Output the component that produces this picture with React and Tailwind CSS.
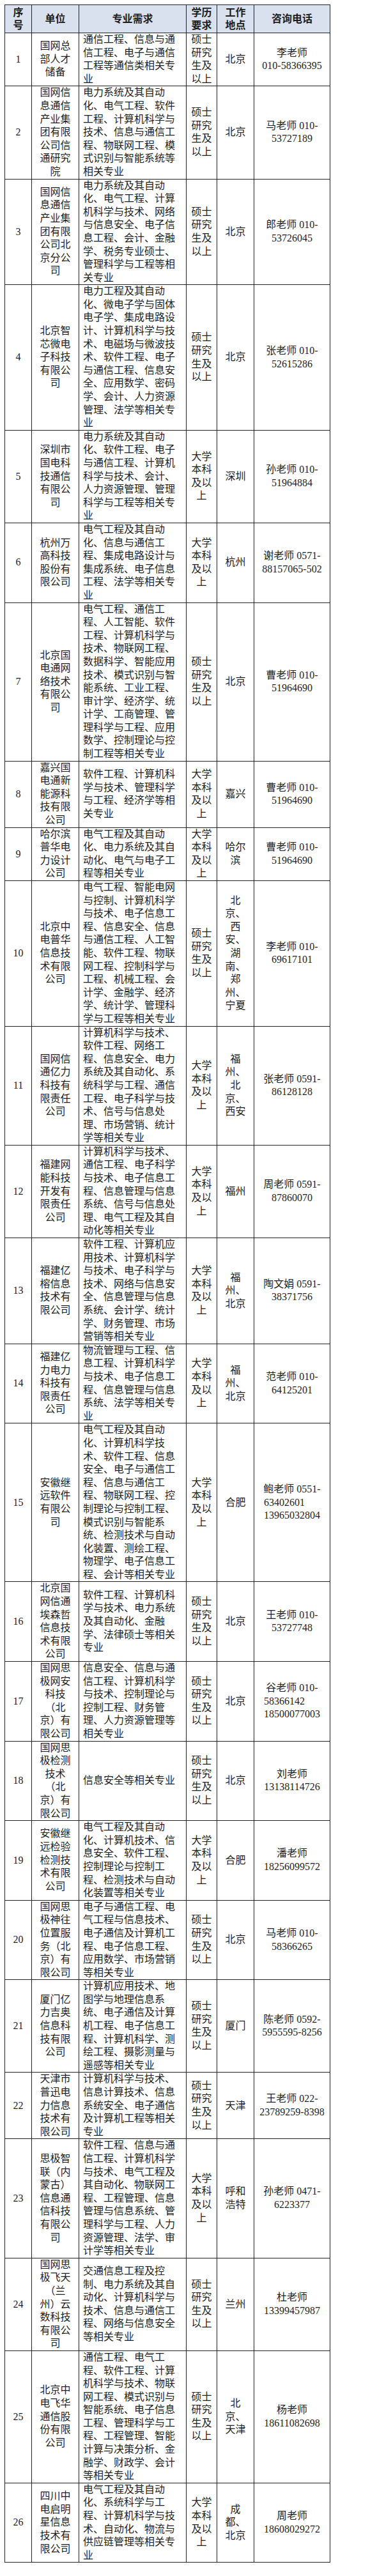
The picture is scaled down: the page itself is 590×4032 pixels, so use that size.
const M = '硕士/研究/生及/以上';
const B = '大学/本科/及以/上';

const ROWS = [
  { unit: '国网总/部人才/储备', major: '通信工程、信息与通/信工程、电子与通信/工程等通信类相关专/业', edu: M, loc: '北京', tel: ['李老师', '010-58366395'] },
  { unit: '国网信/息通信/产业集/团有限/公司信/通研究/院', major: '电力系统及其自动/化、电气工程、软件/工程、计算机科学与/技术、信息与通信工/程、物联网工程、模/式识别与智能系统等/相关专业', edu: M, loc: '北京', tel: ['马老师 010-', '53727189'] },
  { unit: '国网信/息通信/产业集/团有限/公司北/京分公/司', major: '电力系统及其自动/化、电气工程、计算/机科学与技术、网络/与信息安全、电子信/息工程、会计、金融/学、税务专业硕士、/管理科学与工程等相/关专业', edu: M, loc: '北京', tel: ['郎老师 010-', '53726045'] },
  { unit: '北京智/芯微电/子科技/有限公/司', major: '电力工程及其自动/化、微电子学与固体/电子学、集成电路设/计、计算机科学与技/术、电磁场与微波技/术、软件工程、电子/与通信工程、信息安/全、应用数学、密码/学、会计、人力资源/管理、法学等相关专/业', edu: M, loc: '北京', tel: ['张老师 010-', '52615286'] },
  { unit: '深圳市/国电科/技通信/有限公/司', major: '电力系统及其自动/化、软件工程、电子/与通信工程、计算机/科学与技术、会计、/人力资源管理、管理/科学与工程等相关专/业', edu: B, loc: '深圳', tel: ['孙老师 010-', '51964884'] },
  { unit: '杭州万/高科技/股份有/限公司', major: '电气工程及其自动/化、信息与通信工/程、集成电路设计与/集成系统、电子信息/工程、法学等相关专/业', edu: B, loc: '杭州', tel: ['谢老师 0571-', '88157065-502'] },
  { unit: '北京国/电通网/络技术/有限公/司', major: '电气工程、通信工/程、人工智能、软件/工程、计算机科学与/技术、物联网工程、/数据科学、智能应用/技术、模式识别与智/能系统、工业工程、/审计学、经济学、统/计学、工商管理、管/理科学与工程、应用/数学、控制理论与控/制工程等相关专业', edu: M, loc: '北京', tel: ['曹老师 010-', '51964690'] },
  { unit: '嘉兴国/电通新/能源科/技有限/公司', major: '软件工程、计算机科/学与技术、管理科学/与工程、经济学等相/关专业', edu: B, loc: '嘉兴', tel: ['曹老师 010-', '51964690'] },
  { unit: '哈尔滨/普华电/力设计/公司', major: '电气工程及其自动/化、电力系统及其自/动化、电气与电子工/程等相关专业', edu: B, loc: '哈尔/滨', tel: ['曹老师 010-', '51964690'] },
  { unit: '北京中/电普华/信息技/术有限/公司', major: '电气工程、智能电网/与控制、计算机科学/与技术、电子信息工/程、信息安全、信息/与通信工程、人工智/能、软件工程、物联/网工程、控制科学与/工程、机械工程、会/计学、金融学、经济/学、统计学、管理科/学与工程等相关专业', edu: M, loc: '北/京、/西/安、/湖/南、/郑/州、/宁夏', tel: ['李老师 010-', '69617101'] },
  { unit: '国网信/通亿力/科技有/限责任/公司', major: '计算机科学与技术、/软件工程、网络工/程、信息安全、电力/系统及其自动化、系/统科学与工程、通信/工程、电子科学与技/术、信号与信息处/理、市场营销、统计/学等相关专业', edu: B, loc: '福/州、/北/京、/西安', tel: ['张老师 0591-', '86128128'] },
  { unit: '福建网/能科技/开发有/限责任/公司', major: '计算机科学与技术、/通信工程、电子科学/与技术、电子信息工/程、信息管理与信息/系统、信号与信息处/理、电气工程及其自/动化等相关专业', edu: B, loc: '福州', tel: ['周老师 0591-', '87860070'] },
  { unit: '福建亿/榕信息/技术有/限公司', major: '软件工程、计算机应/用技术、计算机科学/与技术、电子科学与/技术、网络与信息安/全、信息管理与信息/系统、会计学、统计/学、财务管理、市场/营销等相关专业', edu: B, loc: '福/州、/北京', tel: ['陶文娟 0591-', '38371756'] },
  { unit: '福建亿/力电力/科技有/限责任/公司', major: '物流管理与工程、信/息工程、计算机科学/与技术、电子信息工/程、信息管理与信息/系统、法学等相关专/业', edu: B, loc: '福/州、/北京', tel: ['范老师 010-', '64125201'] },
  { unit: '安徽继/远软件/有限公/司', major: '电气工程及其自动/化、计算机科学技/术、软件工程、信息/安全、电子与通信工/程、信息与通信工/程、物联网工程、控/制理论与控制工程、/模式识别与智能系/统、检测技术与自动/化装置、测绘工程、/物理学、电子信息工/程、会计等相关专业', edu: B, loc: '合肥', tel: ['鲍老师 0551-', '63402601', '13965032804'], left: true },
  { unit: '北京国/网信通/埃森哲/信息技/术有限/公司', major: '软件工程、计算机科/学与技术、电力系统/及其自动化、金融/学、法律硕士等相关/专业', edu: M, loc: '北京', tel: ['王老师 010-', '53727748'] },
  { unit: '国网思/极网安/科技/（北/京）有/限公司', major: '信息安全、信息与通/信工程、计算机科学/与技术、控制理论与/控制工程、财务管/理、人力资源管理等/相关专业', edu: M, loc: '北京', tel: ['谷老师 010-', '58366142', '18500077003'], left: true },
  { unit: '国网思/极检测/技术/（北/京）有/限公司', major: '信息安全等相关专业', edu: M, loc: '北京', tel: ['刘老师', '13138114726'] },
  { unit: '安徽继/远检验/检测技/术有限/公司', major: '电气工程及其自动/化、计算机技术、信/息安全、软件工程、/控制理论与控制工/程、检测技术与自动/化装置等相关专业', edu: B, loc: '合肥', tel: ['潘老师', '18256099572'] },
  { unit: '国网思/极神往/位置服/务（北/京）有/限公司', major: '电子与通信工程、电/气工程与信息技术、/电子通信及计算机工/程、电子信息工程、/应用数学、市场营销/等相关专业', edu: M, loc: '北京', tel: ['马老师 010-', '58366265'] },
  { unit: '厦门亿/力吉奥/信息科/技有限/公司', major: '计算机应用技术、地/图学与地理信息系/统、电子通信及计算/机工程、电子信息工/程、计算机科学、测/绘工程、摄影测量与/遥感等相关专业', edu: M, loc: '厦门', tel: ['陈老师 0592-', '5955595-8256'] },
  { unit: '天津市/普迅电/力信息/技术有/限公司', major: '计算机科学与技术、/信息计算技术、信息/系统安全、电子通信/及计算机工程等相关/专业', edu: M, loc: '天津', tel: ['王老师 022-', '23789259-8398'] },
  { unit: '思极智/联（内/蒙古）/信息通/信科技/有限公/司', major: '软件工程、信息与通/信工程、计算机科学/与技术、电气工程及/其自动化、物联网工/程、工程管理、信息/管理与信息系统、管/理科学与工程、人力/资源管理、法学、审/计学等相关专业', edu: B, loc: '呼和/浩特', tel: ['孙老师 0471-', '6223377'] },
  { unit: '国网思/极飞天/（兰/州）云/数科技/有限公/司', major: '交通信息工程及控/制、电力系统及其自/动化、计算机科学与/技术、信息与通信工/程、网络与信息安全/等相关专业', edu: M, loc: '兰州', tel: ['杜老师', '13399457987'] },
  { unit: '北京中/电飞华/通信股/份有限/公司', major: '通信工程、电气工/程、软件工程、计算/机科学与技术、物联/网工程、模式识别与/智能系统、电子信息/工程、管理科学与工/程、工程管理、智能/计算与决策分析、金/融学、财政学、会计/等相关专业', edu: M, loc: '北/京、/天津', tel: ['杨老师', '18611082698'] },
  { unit: '四川中/电启明/星信息/技术有/限公司', major: '电气工程及其自动/化、系统科学与工/程、计算机科学与技/术、自动化、物流与/供应链管理等相关专/业', edu: B, loc: '成/都、/北京', tel: ['周老师', '18608029272'] },
];

function Lines({ text }) {
  return text.split('/').map((l, i) => (
    <div key={i} className="whitespace-nowrap">{l}</div>
  ));
}

function Tel({ lines, left }) {
  if (!left) return lines.map((l, i) => <div key={i} className="whitespace-nowrap">{l}</div>);
  return (
    <>
      <div className="whitespace-nowrap">{lines[0]}</div>
      <div className="inline-block text-left">
        {lines.slice(1).map((l, i) => <div key={i} className="whitespace-nowrap">{l}</div>)}
      </div>
    </>
  );
}

const td = 'border border-[#222] p-0 align-middle text-center';
const th = 'border border-[#222] p-0 align-middle text-center bg-[#d9e1ee] font-bold leading-[20px] h-[44px]';

export default function App() {
  return (
    <div className="bg-white min-h-[4032px] pt-[7px] pl-[7px] text-[16px] leading-[20.6px] text-[#1e1e1e] font-['Liberation_Serif','Noto_Sans_CJK_SC',serif]">
      <table className="table-fixed border-collapse w-[509px]">
        <colgroup>
          <col className="w-[42px]" />
          <col className="w-[74px]" />
          <col className="w-[168px]" />
          <col className="w-[48px]" />
          <col className="w-[58px]" />
          <col className="w-[119px]" />
        </colgroup>
        <thead>
          <tr>
            <th className={th}><div>序</div><div>号</div></th>
            <th className={th}>单位</th>
            <th className={th}>专业需求</th>
            <th className={th}><div>学历</div><div>要求</div></th>
            <th className={th}><div>工作</div><div>地点</div></th>
            <th className={th}>咨询电话</th>
          </tr>
        </thead>
        <tbody>
          {ROWS.map((r, i) => (
            <tr key={i}>
              <td className={td}>{i + 1}</td>
              <td className={td}><Lines text={r.unit} /></td>
              <td className={`${td} !text-left pl-[6px]`}><Lines text={r.major} /></td>
              <td className={td}><Lines text={r.edu} /></td>
              <td className={td}><Lines text={r.loc} /></td>
              <td className={td}><Tel lines={r.tel} left={r.left} /></td>
            </tr>
          ))}
        </tbody>
      </table>
    </div>
  );
}
